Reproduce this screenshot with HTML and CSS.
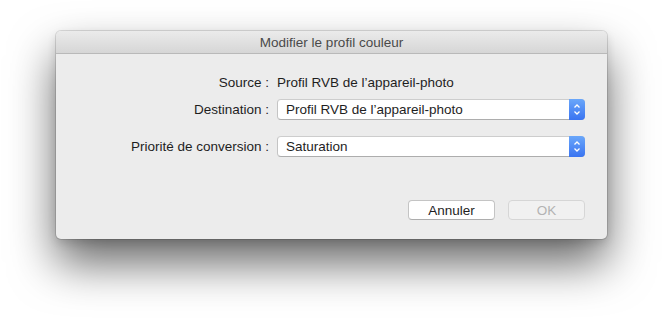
FILE: index.html
```html
<!DOCTYPE html>
<html lang="fr">
<head>
  <meta charset="utf-8">
  <title>Modifier le profil couleur</title>
  <link rel="stylesheet" href="styles.css">
</head>
<body>
  <div class="dialog">
    <div class="titlebar">Modifier le profil couleur</div>
    <div class="dialog-body">
      <div class="form-grid">
        <div class="label">Source :</div>
        <div class="value">Profil RVB de l’appareil-photo</div>

        <div class="label label-dest">Destination :</div>
        <div class="popup popup-dest">
          <span>Profil RVB de l’appareil-photo</span>
          <span class="stepper">
            <svg width="16" height="21" viewBox="0 0 16 21">
              <path d="M5.5 8.5 L8 6 L10.5 8.5" fill="none" stroke="#fff" stroke-width="1.3"/>
              <path d="M5.5 12.5 L8 15 L10.5 12.5" fill="none" stroke="#fff" stroke-width="1.3"/>
            </svg>
          </span>
        </div>

        <div class="label label-prio">Priorité de conversion :</div>
        <div class="popup popup-prio">
          <span>Saturation</span>
          <span class="stepper">
            <svg width="16" height="21" viewBox="0 0 16 21">
              <path d="M5.5 8.5 L8 6 L10.5 8.5" fill="none" stroke="#fff" stroke-width="1.3"/>
              <path d="M5.5 12.5 L8 15 L10.5 12.5" fill="none" stroke="#fff" stroke-width="1.3"/>
            </svg>
          </span>
        </div>
      </div>

      <div class="buttons">
        <button class="btn">Annuler</button>
        <button class="btn btn-ok" disabled>OK</button>
      </div>
    </div>
  </div>
</body>
</html>
```

FILE: styles.css
```css
html {
  height: 100%;
  background: #ffffff;
}

body {
  margin: 0;
  min-height: 100%;
  box-sizing: border-box;
  padding: 31px 0 0 56px;
  background: #ffffff;
  font-family: "Liberation Sans", Arial, sans-serif;
  font-size: 13.5px;
  color: #1e1e1e;
}

.dialog {
  width: 551px;
  height: 208px;
  background: #ececec;
  border-radius: 5px;
  box-shadow: 0 0 0 1px rgba(0, 0, 0, 0.12), 0 24px 46px rgba(0, 0, 0, 0.6), 0 4px 10px rgba(0, 0, 0, 0.12);
  display: flex;
  flex-direction: column;
  overflow: hidden;
}

.titlebar {
  height: 22px;
  line-height: 23px;
  text-align: center;
  color: #4a4a4a;
  background: linear-gradient(#ebebeb, #d6d6d6);
  border-bottom: 1px solid #b9b9b9;
}

.dialog-body {
  flex: 1;
  display: flex;
  flex-direction: column;
  padding: 21px 22px 19px 0;
}

.form-grid {
  display: grid;
  grid-template-columns: 213px 308px;
  column-gap: 8px;
  align-items: center;
}

.label {
  text-align: right;
  line-height: 16px;
}

.value {
  line-height: 16px;
}

.label-dest, .popup-dest {
  margin-top: 8px;
}

.label-prio, .popup-prio {
  margin-top: 16px;
}

.popup {
  height: 21px;
  box-sizing: border-box;
  background: #fff;
  border: 1px solid #c4c4c4;
  border-top-color: #cdcdcd;
  border-bottom-color: #adadad;
  border-radius: 4px;
  display: flex;
  align-items: center;
  justify-content: space-between;
  padding-left: 8px;
}

.stepper {
  width: 16px;
  height: 21px;
  margin: -1px -1px -1px 0;
  border-radius: 0 4px 4px 0;
  background: linear-gradient(#6aa7fa, #3a74f1);
  display: flex;
}

.buttons {
  margin-top: auto;
  display: flex;
  justify-content: flex-end;
  gap: 13px;
}

.btn {
  height: 20px;
  width: 87px;
  padding: 0;
  font-family: inherit;
  font-size: 13.5px;
  color: #1e1e1e;
  background: #fff;
  border: 1px solid #c4c4c4;
  border-bottom-color: #adadad;
  border-radius: 4px;
}

.btn-ok {
  width: 77px;
  color: #b3b3b3;
  background: #f1f1f1;
  border-color: #d6d6d6;
}
```
